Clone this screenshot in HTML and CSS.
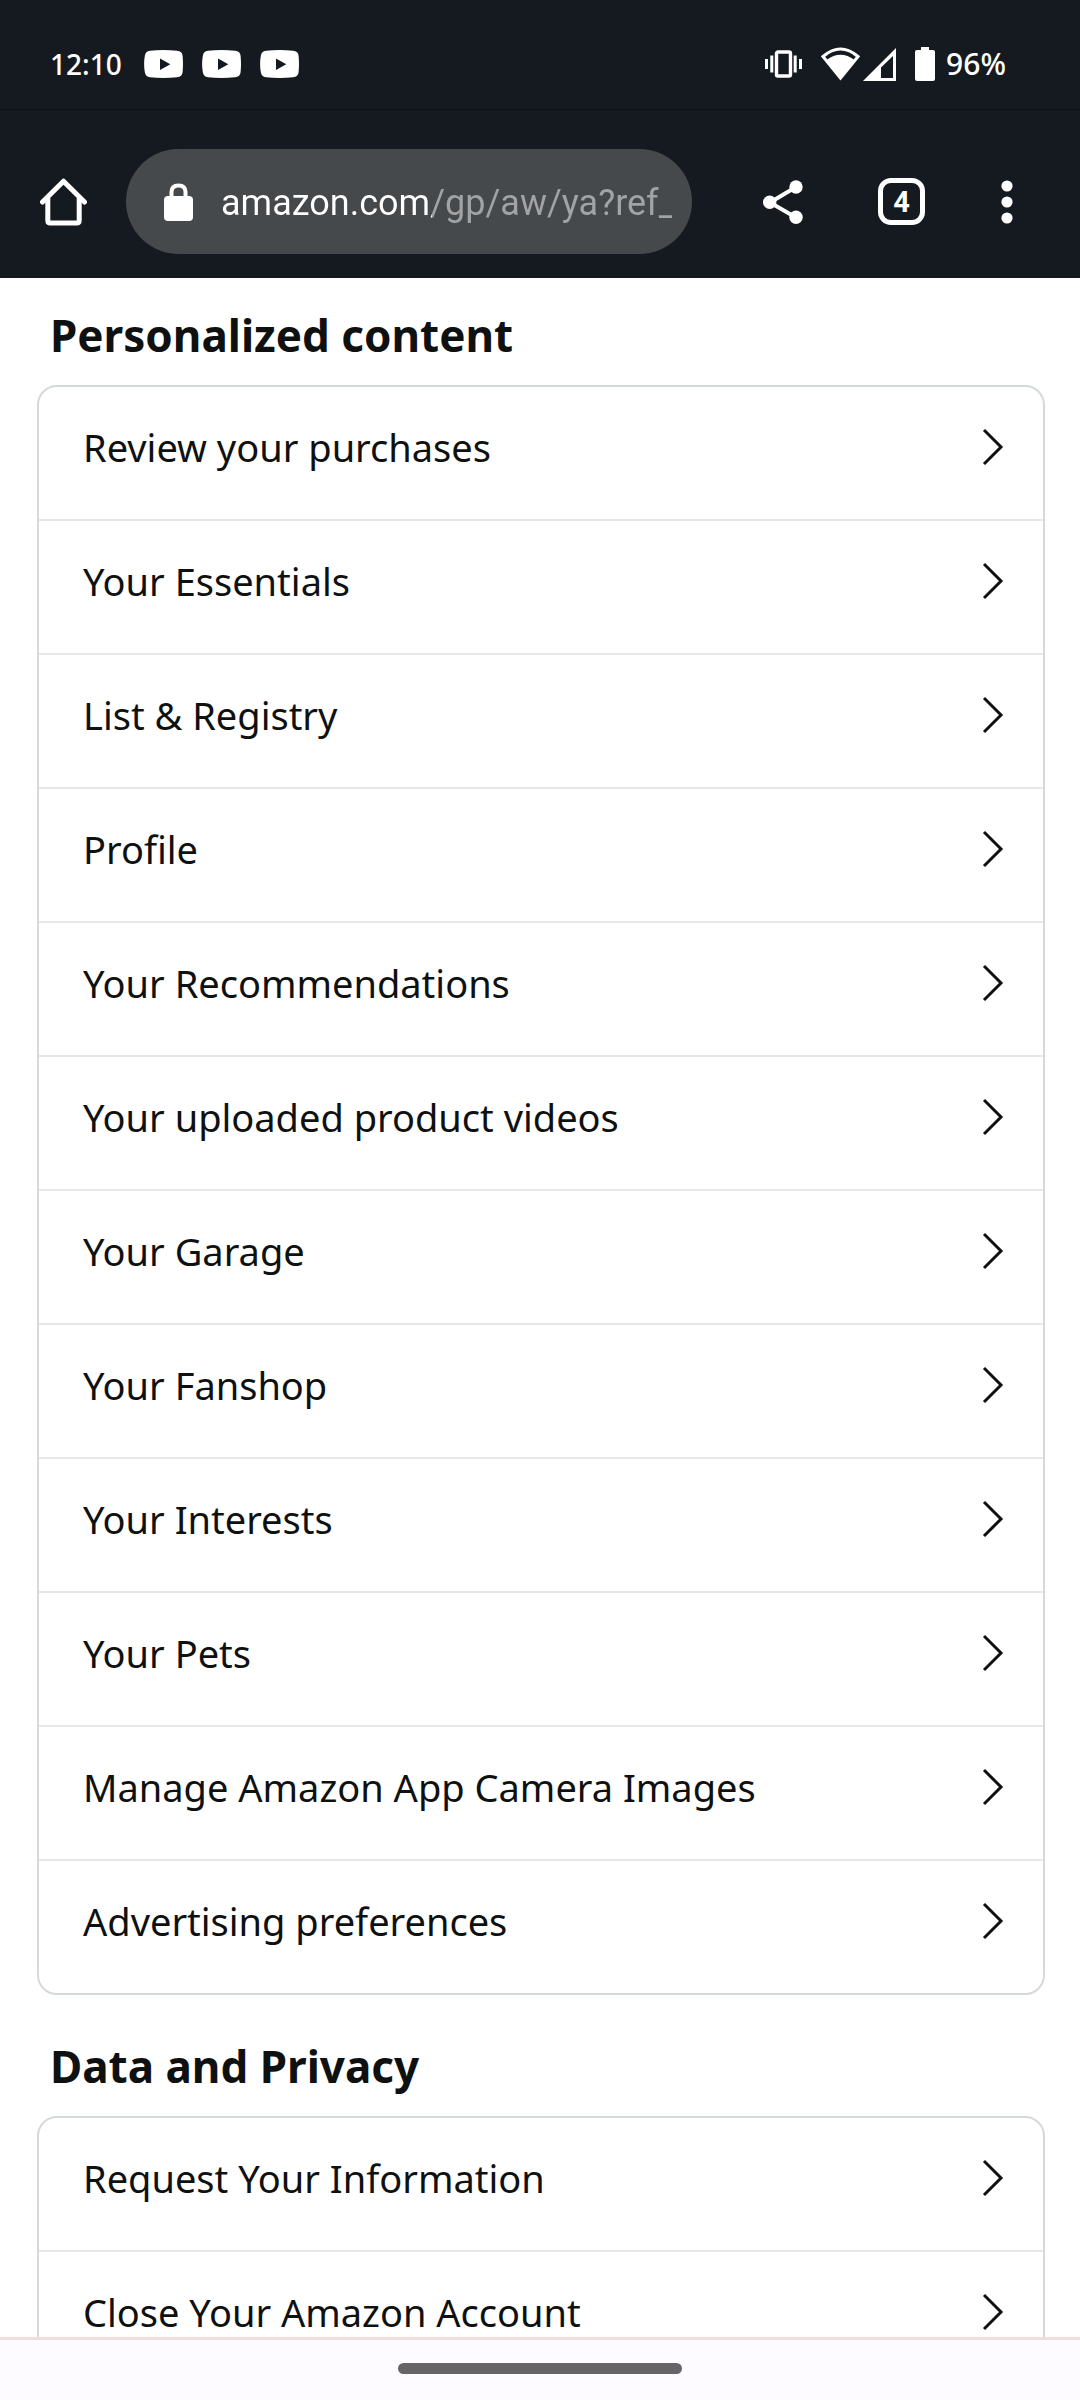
FILE: index.html
```html
<!DOCTYPE html>
<html lang="en">
<head>
    <meta charset="UTF-8">
    <meta name="viewport" content="width=device-width, initial-scale=1.0">
    <title>Your Account</title>
    <link rel="stylesheet" href="styles.css">
</head>
<body>
    <svg class="defs" aria-hidden="true">
        <symbol id="youtube" viewBox="0 0 39 28">
            <path fill="#fff" fill-rule="evenodd" d="M6 .8Q19.500-.6 33 .8Q38.300 1.200 38.600 6Q39.400 14 38.600 22Q38.300 26.800 33 27.200Q19.500 28.600 6 27.200Q1.500 26.800.8 22Q-.6 14 .8 6Q1.500 1.200 6 .8ZM16 8.500V20L26.300 14.200Z"/>
        </symbol>
        <symbol id="chevron" viewBox="0 0 22 38">
            <path fill="none" stroke="#0f1111" stroke-width="3" d="M2 2L19 19L2 36"/>
        </symbol>
    </svg>

    <!-- status bar -->
    <div class="status">
        <span class="time">12:10</span>
        <div class="notes">
            <svg width="39" height="28"><use href="#youtube"/></svg>
            <svg width="39" height="28"><use href="#youtube"/></svg>
            <svg width="39" height="28"><use href="#youtube"/></svg>
        </div>
        <div class="signals">
            <svg class="vibrate" width="37" height="28" viewBox="0 0 37 28">
                <rect x="11.500" y="2" width="14" height="24" rx="1.500" fill="none" stroke="#fff" stroke-width="3.400"/>
                <path stroke="#fff" stroke-width="3" d="M1.500 9V19M6.800 5.500V22.500M30.200 5.500V22.500M35.500 9V19"/>
            </svg>
            <svg class="wifi" width="39" height="34" viewBox="0 0 39 34">
                <path fill="none" stroke="#fff" stroke-width="3" d="M2 9.500Q19.500-5.500 37 9.500L19.500 31Z"/>
                <path fill="#fff" d="M5.500 13Q19.500 2.500 33.500 13L19.500 33Z"/>
            </svg>
            <svg class="cell" width="33" height="33" viewBox="0 0 33 33">
                <path fill="#fff" fill-rule="evenodd" d="M33 0V33H0ZM30 8L18 19.500V30H30Z"/>
            </svg>
            <svg class="battery" width="20" height="34" viewBox="0 0 20 34">
                <path fill="#fff" d="M6 0H14V3H18Q20 3 20 5V32Q20 34 18 34H2Q0 34 0 32V5Q0 3 2 3H6Z"/>
            </svg>
            <span class="percent">96%</span>
        </div>
    </div>

    <!-- browser toolbar -->
    <header>
        <button class="home" aria-label="Home">
            <svg width="47" height="48" viewBox="0 0 47 48">
                <path fill="none" stroke="#fff" stroke-width="5" stroke-linecap="round" stroke-linejoin="round" d="M2.500 24L23.500 3.200L44.500 24"/>
                <path fill="none" stroke="#fff" stroke-width="5" stroke-linejoin="round" d="M7.800 20V42.500Q7.800 45 10.300 45H36.700Q39.200 45 39.200 42.500V20"/>
            </svg>
        </button>
        <div class="address">
            <svg width="29" height="38" viewBox="0 0 29 38">
                <path fill="none" stroke="#fff" stroke-width="4" d="M7.500 16V9Q7.500 2.500 14.500 2.500Q21.500 2.500 21.500 9V16"/>
                <rect y="13" width="29" height="25" rx="4" fill="#fff"/>
            </svg>
            <input type="text" aria-label="Address" value="amazon.com/gp/aw/ya?ref_">
        </div>
        <button class="share" aria-label="Share">
            <svg width="40" height="44" viewBox="0 0 40 44">
                <path fill="none" stroke="#fff" stroke-width="4" d="M33 7L7 22.500L33 37.500"/>
                <circle cx="33" cy="7" r="6.700" fill="#fff"/>
                <circle cx="6.700" cy="22.300" r="6.700" fill="#fff"/>
                <circle cx="33" cy="37.300" r="6.700" fill="#fff"/>
            </svg>
        </button>
        <button class="tabs" aria-label="4 open tabs">4</button>
        <button class="more" aria-label="More">
            <svg width="12" height="44" viewBox="0 0 12 44">
                <circle cx="6" cy="6" r="5.600" fill="#fff"/>
                <circle cx="6" cy="22" r="5.600" fill="#fff"/>
                <circle cx="6" cy="38" r="5.600" fill="#fff"/>
            </svg>
        </button>
    </header>

    <main>
        <section>
            <h2>Personalized content</h2>
            <ul>
                <li><a href="#">Review your purchases<svg width="22" height="38"><use href="#chevron"/></svg></a></li>
                <li><a href="#">Your Essentials<svg width="22" height="38"><use href="#chevron"/></svg></a></li>
                <li><a href="#">List &amp; Registry<svg width="22" height="38"><use href="#chevron"/></svg></a></li>
                <li><a href="#">Profile<svg width="22" height="38"><use href="#chevron"/></svg></a></li>
                <li><a href="#">Your Recommendations<svg width="22" height="38"><use href="#chevron"/></svg></a></li>
                <li><a href="#">Your uploaded product videos<svg width="22" height="38"><use href="#chevron"/></svg></a></li>
                <li><a href="#">Your Garage<svg width="22" height="38"><use href="#chevron"/></svg></a></li>
                <li><a href="#">Your Fanshop<svg width="22" height="38"><use href="#chevron"/></svg></a></li>
                <li><a href="#">Your Interests<svg width="22" height="38"><use href="#chevron"/></svg></a></li>
                <li><a href="#">Your Pets<svg width="22" height="38"><use href="#chevron"/></svg></a></li>
                <li><a href="#">Manage Amazon App Camera Images<svg width="22" height="38"><use href="#chevron"/></svg></a></li>
                <li><a href="#">Advertising preferences<svg width="22" height="38"><use href="#chevron"/></svg></a></li>
            </ul>
        </section>
        <section>
            <h2>Data and Privacy</h2>
            <ul>
                <li><a href="#">Request Your Information<svg width="22" height="38"><use href="#chevron"/></svg></a></li>
                <li><a href="#">Close Your Amazon Account<svg width="22" height="38"><use href="#chevron"/></svg></a></li>
            </ul>
        </section>
    </main>

    <!-- gesture bar -->
    <footer>
        <div class="handle"></div>
    </footer>
</body>
</html>
```

FILE: styles.css
```css
*{
    padding:0;
    margin:0;
    box-sizing: border-box;
}
body{
    display: flex;
    flex-direction: column;
    height:100vh;
    background:#fff;
    color:#0f1111;
    font-family: "Noto Sans", sans-serif;
}
svg{
    display: block;
    flex:none;
}
.defs{
    position: absolute;
    width:0;
    height:0;
}
button{
    border:none;
    background:none;
    color:#fff;
}

/* status bar */
.status{
    display: flex;
    flex:none;
    align-items: center;
    height:110px;
    padding:19px 74px 0 50px;
    border-bottom:1px solid #110f15;
    background:#151a21;
    color:#fff;
    font-size:28px;
    font-weight:500;
    line-height:40px;
}
.notes{
    display: flex;
    gap:19px;
    margin-left:22px;
}
.signals{
    display: flex;
    align-items: center;
    margin-left:auto;
}
.percent{
    font-size:30px;
}
.wifi{
    margin-left:19px;
}
.cell{
    margin-left:3px;
}
.battery{
    margin:0 11px 0 19px;
}

/* toolbar */
header{
    display: flex;
    flex:none;
    align-items: center;
    padding:39px 67px 24px 40px;
    background:#151a21;
}
.address{
    display: flex;
    flex:1;
    align-items: center;
    gap:28px;
    min-width:0;
    height:105px;
    margin:0 71px 0 39px;
    padding:0 20px 0 38px;
    border-radius:53px;
    background:#46494c;
}
.address input{
    flex:1;
    min-width:0;
    height:60px;
    padding-top:3px;
    border:none;
    outline:none;
    /* host in white, path in grey */
    background:linear-gradient(to right, #fff 211px, #a2a3a5 211px);
    background-clip: text;
    -webkit-background-clip: text;
    color:transparent;
    font-family: Roboto, sans-serif;
    font-size:36px;
}
.tabs{
    width:47px;
    height:47px;
    margin:0 76px 0 75px;
    border:5px solid #fff;
    border-radius:13px;
    font-family: Roboto, sans-serif;
    font-size:29px;
    font-weight:700;
    line-height:36px;
}

/* account lists */
main{
    flex:1;
    min-height:0;
    overflow: hidden;
    padding:27px 35px 0 37px;
}
section{
    margin-bottom:41px;
}
h2{
    padding:0 13px 20px;
    font-size:44px;
    font-weight:700;
    line-height:60px;
}
ul{
    list-style: none;
    border:2px solid #d5d9d9;
    border-radius:20px;
}
li + li{
    border-top:2px solid #e7e7e7;
}
li a{
    display: flex;
    justify-content: space-between;
    align-items: center;
    padding:36px 39px 48px 44px;
    color:#0f1111;
    font-size:38px;
    line-height:48px;
    text-decoration: none;
}

footer{
    display: flex;
    flex:none;
    justify-content: center;
    height:63px;
    padding-top:23px;
    border-top:3px solid #f3dce0;
    background:#fdfbff;
}
.handle{
    width:284px;
    height:11px;
    border-radius:6px;
    background:#666467;
}
```
